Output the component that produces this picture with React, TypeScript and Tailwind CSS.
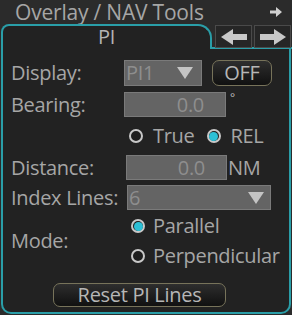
import React from "react";

function Radio({ checked }: { checked?: boolean }) {
  return (
    <span className="w-[14px] h-[14px] rounded-full border-2 border-[#c8c8c8] bg-[#1e1e1e] flex items-center justify-center shrink-0">
      {checked && <span className="w-[9px] h-[9px] rounded-full bg-[#2cc0d6]" />}
    </span>
  );
}

function Triangle() {
  return (
    <svg width="16" height="12" viewBox="0 0 16 12">
      <polygon points="0,0 16,0 8,12" fill="#c4c4c4" />
    </svg>
  );
}

function ArrowBtn({ dir }: { dir: "left" | "right" }) {
  return (
    <div className="w-[37px] h-[23px] border border-[#4a4a4a] bg-[#262626] flex items-center justify-center">
      <svg width="26" height="16" viewBox="0 0 26 16" className={dir === "right" ? "" : "-scale-x-100"}>
        <polygon points="0,5 14,5 14,0 26,8 14,16 14,11 0,11" fill="#c8c8c8" />
      </svg>
    </div>
  );
}

export default function App() {
  return (
    <div className="w-[292px] h-[315px] bg-[#2b2b2b] text-[#a6a6a6] text-[20px] leading-none tracking-[-0.3px] font-['Open_Sans',Arial,sans-serif] flex flex-col overflow-hidden">
      {/* header */}
      <div className="h-[24px] flex items-center justify-between pl-[15px] pr-[10px]">
        <span className="text-[21px] leading-[24px] tracking-[-0.2px]">Overlay / NAV Tools</span>
        <svg width="12" height="10" viewBox="0 0 12 10">
          <polygon points="0,3.5 6,3.5 6,0 12,5 6,10 6,6.5 0,6.5" fill="#d0d0d0" />
        </svg>
      </div>

      {/* tabs */}
      <div className="h-[25px] flex">
        <div className="w-[211px] ml-[1px] border-t-2 border-l-2 border-r-2 border-[#2a9ea8] rounded-tl-[8px] rounded-tr-[14px] bg-[#222222] flex items-center justify-center text-[#b4b4b4] pb-[2px]">
          PI
        </div>
        <div className="flex-1 border-b-2 border-[#2a9ea8] flex items-start gap-[2px] pl-[3px] pt-[1px]">
          <ArrowBtn dir="left" />
          <ArrowBtn dir="right" />
        </div>
      </div>

      {/* panel body */}
      <div className="flex-1 mx-[1px] mb-[1px] border-l-2 border-r-2 border-b-2 border-[#2a9ea8] rounded-b-[10px] bg-[#222222] pl-[8px] flex flex-col">
        <div className="mt-[11px] h-[26px] flex items-center">
          <span className="w-[113px]">Display:</span>
          <div className="w-[78px] h-[26px] bg-[#646464] border border-[#7a7a7a] flex items-center justify-between pl-[1px] pr-[8px] text-[#8e8e8e]">
            <span>PI1</span>
            <Triangle />
          </div>
          <div className="ml-[10px] w-[60px] h-[26px] rounded-[7px] border border-[#77735a] bg-gradient-to-b from-[#2e2e2e] to-[#111111] flex items-center justify-center text-[#b6b6b6]">
            OFF
          </div>
        </div>

        <div className="mt-[6px] h-[25px] flex items-center">
          <span className="w-[113px]">Bearing:</span>
          <div className="w-[102px] h-[25px] bg-[#646464] border border-[#7a7a7a] flex items-center justify-end pr-[21px] text-[#8e8e8e]">
            0.0
          </div>
          <span className="self-start ml-[4px] text-[12px] text-[#bdbdbd]">°</span>
        </div>

        <div className="mt-[9px] h-[20px] flex items-center pl-[118px]">
          <Radio />
          <span className="ml-[10px]">True</span>
          <span className="ml-[12px]"><Radio checked /></span>
          <span className="ml-[10px]">REL</span>
        </div>

        <div className="mt-[9px] h-[25px] flex items-center">
          <span className="w-[115px]">Distance:</span>
          <div className="w-[101px] h-[25px] bg-[#646464] border border-[#7a7a7a] flex items-center justify-end pr-[21px] text-[#8e8e8e]">
            0.0
          </div>
          <span className="ml-[1px]">NM</span>
        </div>

        <div className="mt-[5px] h-[25px] flex items-center">
          <span className="w-[116px]">Index Lines:</span>
          <div className="w-[144px] h-[25px] bg-[#646464] border border-[#7a7a7a] flex items-center justify-between pl-[1px] pr-[6px] text-[#8e8e8e]">
            <span>6</span>
            <Triangle />
          </div>
        </div>

        <div className="mt-[1px] h-[60px] flex items-center">
          <span className="w-[120px]">Mode:</span>
          <div className="flex flex-col">
            <div className="h-[30px] flex items-center">
              <Radio checked />
              <span className="ml-[8px]">Parallel</span>
            </div>
            <div className="h-[30px] flex items-center">
              <Radio />
              <span className="ml-[8px]">Perpendicular</span>
            </div>
          </div>
        </div>

        <div className="mt-[12px] ml-[42px] w-[173px] h-[24px] rounded-[7px] border border-[#77735a] bg-gradient-to-b from-[#2e2e2e] to-[#111111] flex items-center justify-center text-[#b6b6b6]">
          Reset PI Lines
        </div>
      </div>
    </div>
  );
}
